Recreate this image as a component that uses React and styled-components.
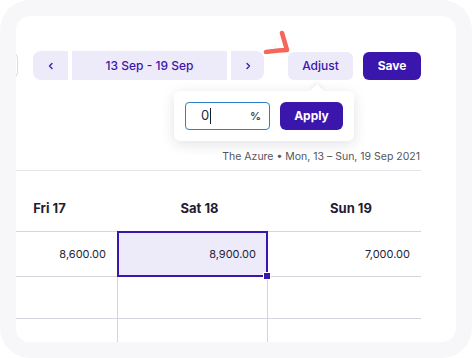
import React from 'react';
import styled, { createGlobalStyle } from 'styled-components';

const purple = '#3a16ad';
const lavender = '#edeaf9';
const gridLine = '#d6d4dc';

const GlobalStyle = createGlobalStyle`
  html, body {
    margin: 0;
    padding: 0;
    background: #ffffff;
  }
  body {
    font-family: Inter, "Noto Sans", "Liberation Sans", sans-serif;
    -webkit-font-smoothing: antialiased;
  }
`;

const Frame = styled.div`
  width: 472px;
  height: 358px;
  box-sizing: border-box;
  padding: 16px;
  background: #f7f7f9;
  border-radius: 30px;
`;

const Card = styled.div`
  position: relative;
  height: 100%;
  background: #ffffff;
  border-radius: 14px;
  overflow: hidden;
`;

const Scroller = styled.div`
  margin-left: -48px;
  padding: 35px 35px 0 0;
  display: flex;
  flex-direction: column;
`;

const Toolbar = styled.div`
  display: flex;
  justify-content: space-between;
  align-items: center;
  height: 29px;
`;

const ClippedSelect = styled.div`
  width: 50px;
  height: 29px;
  box-sizing: border-box;
  border: 1px solid #dcdbe2;
  border-radius: 8px;
`;

const Controls = styled.div`
  display: flex;
  align-items: center;
`;

const Pager = styled.div`
  display: flex;
  gap: 4px;
  margin-right: 24px;
`;

const PagerButton = styled.button`
  width: ${p => p.$w}px;
  height: 29px;
  border: none;
  padding: 0;
  background: ${lavender};
  color: ${purple};
  border-radius: ${p => (p.$side === 'left' ? '8px 0 0 8px' : '0 8px 8px 0')};
  display: flex;
  align-items: center;
  justify-content: center;
  font-family: inherit;
`;

const DateRange = styled.div`
  width: 155px;
  height: 29px;
  background: ${lavender};
  color: ${purple};
  font-size: 12px;
  font-weight: 500;
  display: flex;
  align-items: center;
  justify-content: center;
`;

const AdjustWrap = styled.div`
  position: relative;
  margin-right: 10px;
`;

const ActionButton = styled.button`
  width: ${p => p.$w}px;
  height: 28px;
  padding: 0;
  border: none;
  border-radius: 6px;
  font-family: inherit;
  font-size: 12px;
  font-weight: ${p => (p.$primary ? 700 : 500)};
  background: ${p => (p.$primary ? purple : lavender)};
  color: ${p => (p.$primary ? '#ffffff' : purple)};
  display: flex;
  align-items: center;
  justify-content: center;
`;

const Scribble = styled.svg`
  position: absolute;
  left: -25px;
  top: -26px;
  pointer-events: none;
`;

const Popover = styled.div`
  position: absolute;
  top: 39px;
  right: -1px;
  width: 180px;
  height: 50px;
  box-sizing: border-box;
  padding: 11px;
  background: #ffffff;
  border-radius: 6px;
  box-shadow: 0 3px 14px rgba(20, 20, 50, 0.12);
  display: flex;
  align-items: center;
  gap: 10px;
  z-index: 2;

  &::before {
    content: '';
    position: absolute;
    top: -5px;
    right: 32px;
    width: 10px;
    height: 10px;
    background: #ffffff;
    transform: rotate(45deg);
    box-shadow: -2px -2px 4px rgba(20, 20, 50, 0.05);
  }
`;

const PercentField = styled.div`
  width: 85px;
  height: 28px;
  box-sizing: border-box;
  border: 1px solid #2e7fc9;
  border-radius: 4px;
  display: flex;
  align-items: center;
  justify-content: space-between;
  padding: 0 8px 0 15px;
  font-size: 13px;
  color: #2a2838;
`;

const Caret = styled.span`
  display: inline-block;
  width: 1px;
  height: 16px;
  background: #1a1a2a;
  vertical-align: middle;
  margin-left: 1px;
`;

const Unit = styled.span`
  font-size: 11px;
  font-weight: 600;
  color: #3a3f4a;
`;

const Subtitle = styled.div`
  margin-top: 70px;
  padding-bottom: 6px;
  border-bottom: 1px solid #e4e3ea;
  margin-left: 48px;
  text-align: right;
  font-size: 10.5px;
  line-height: 14px;
  color: #555560;
  padding-right: 1px;
`;

const Grid = styled.div`
  display: grid;
  grid-template-columns: 150px 150px 153px;
`;

const HeadCell = styled.div`
  height: 61px;
  box-sizing: border-box;
  padding: 0 0 15px 13px;
  display: flex;
  align-items: flex-end;
  justify-content: center;
  border-bottom: 1px solid ${gridLine};
  font-size: 13px;
  font-weight: 700;
  line-height: 16px;
  color: #1f1d33;
`;

const BodyCell = styled.div`
  position: relative;
  height: ${p => p.$h}px;
  box-sizing: border-box;
  padding-right: 11px;
  display: flex;
  align-items: center;
  justify-content: flex-end;
  border-bottom: 1px solid ${gridLine};
  border-right: ${p => (p.$last ? 'none' : `1px solid ${gridLine}`)};
  background: ${p => (p.$selected ? lavender : '#ffffff')};
  font-size: 11px;
  color: #26243a;

  ${p =>
    p.$selected &&
    `
    &::after {
      content: '';
      position: absolute;
      top: -1px;
      left: -1px;
      right: -1px;
      bottom: -1px;
      border: 2px solid ${purple};
      pointer-events: none;
    }
  `}
`;

const FillHandle = styled.span`
  position: absolute;
  right: -4px;
  bottom: -4px;
  width: 6px;
  height: 6px;
  background: ${purple};
  border: 1px solid #ffffff;
  z-index: 1;
`;

const days = ['Fri 17', 'Sat 18', 'Sun 19'];
const rows = [
  { h: 45, values: ['8,600.00', '8,900.00', '7,000.00'], selected: 1 },
  { h: 42, values: ['', '', ''] },
  { h: 42, values: ['', '', ''] },
];

function Chevron({ dir }) {
  return (
    <svg width="8" height="8" viewBox="0 0 8 8">
      <path
        d={dir === 'left' ? 'M5 1.5 L2.5 4 L5 6.5' : 'M3 1.5 L5.5 4 L3 6.5'}
        fill="none"
        stroke={purple}
        strokeWidth="1.3"
        strokeLinecap="round"
        strokeLinejoin="round"
      />
    </svg>
  );
}

export default function App() {
  return (
    <>
      <GlobalStyle />
      <Frame>
        <Card>
          <Scroller>
            <Toolbar>
              <ClippedSelect />
              <Controls>
                <Pager>
                  <PagerButton $w={35} $side="left"><Chevron dir="left" /></PagerButton>
                  <DateRange>13 Sep - 19 Sep</DateRange>
                  <PagerButton $w={33} $side="right"><Chevron dir="right" /></PagerButton>
                </Pager>
                <AdjustWrap>
                  <Scribble width="30" height="28" viewBox="0 0 30 28">
                    <path
                      d="M3 26 C10 25 17 24 24 24 L19 7"
                      fill="none"
                      stroke="#f4675a"
                      strokeWidth="4.5"
                      strokeLinecap="round"
                      strokeLinejoin="round"
                    />
                  </Scribble>
                  <ActionButton $w={65}>Adjust</ActionButton>
                  <Popover>
                    <PercentField>
                      <span>0<Caret /></span>
                      <Unit>%</Unit>
                    </PercentField>
                    <ActionButton $primary $w={63}>Apply</ActionButton>
                  </Popover>
                </AdjustWrap>
                <ActionButton $primary $w={58}>Save</ActionButton>
              </Controls>
            </Toolbar>

            <Subtitle>The Azure • Mon, 13 – Sun, 19 Sep 2021</Subtitle>

            <Grid>
              {days.map(d => (
                <HeadCell key={d}>{d}</HeadCell>
              ))}
              {rows.map((row, r) =>
                row.values.map((v, c) => (
                  <BodyCell
                    key={`${r}-${c}`}
                    $h={row.h}
                    $last={c === 2}
                    $selected={row.selected === c}
                  >
                    {v}
                    {row.selected === c && <FillHandle />}
                  </BodyCell>
                ))
              )}
            </Grid>
          </Scroller>
        </Card>
      </Frame>
    </>
  );
}
